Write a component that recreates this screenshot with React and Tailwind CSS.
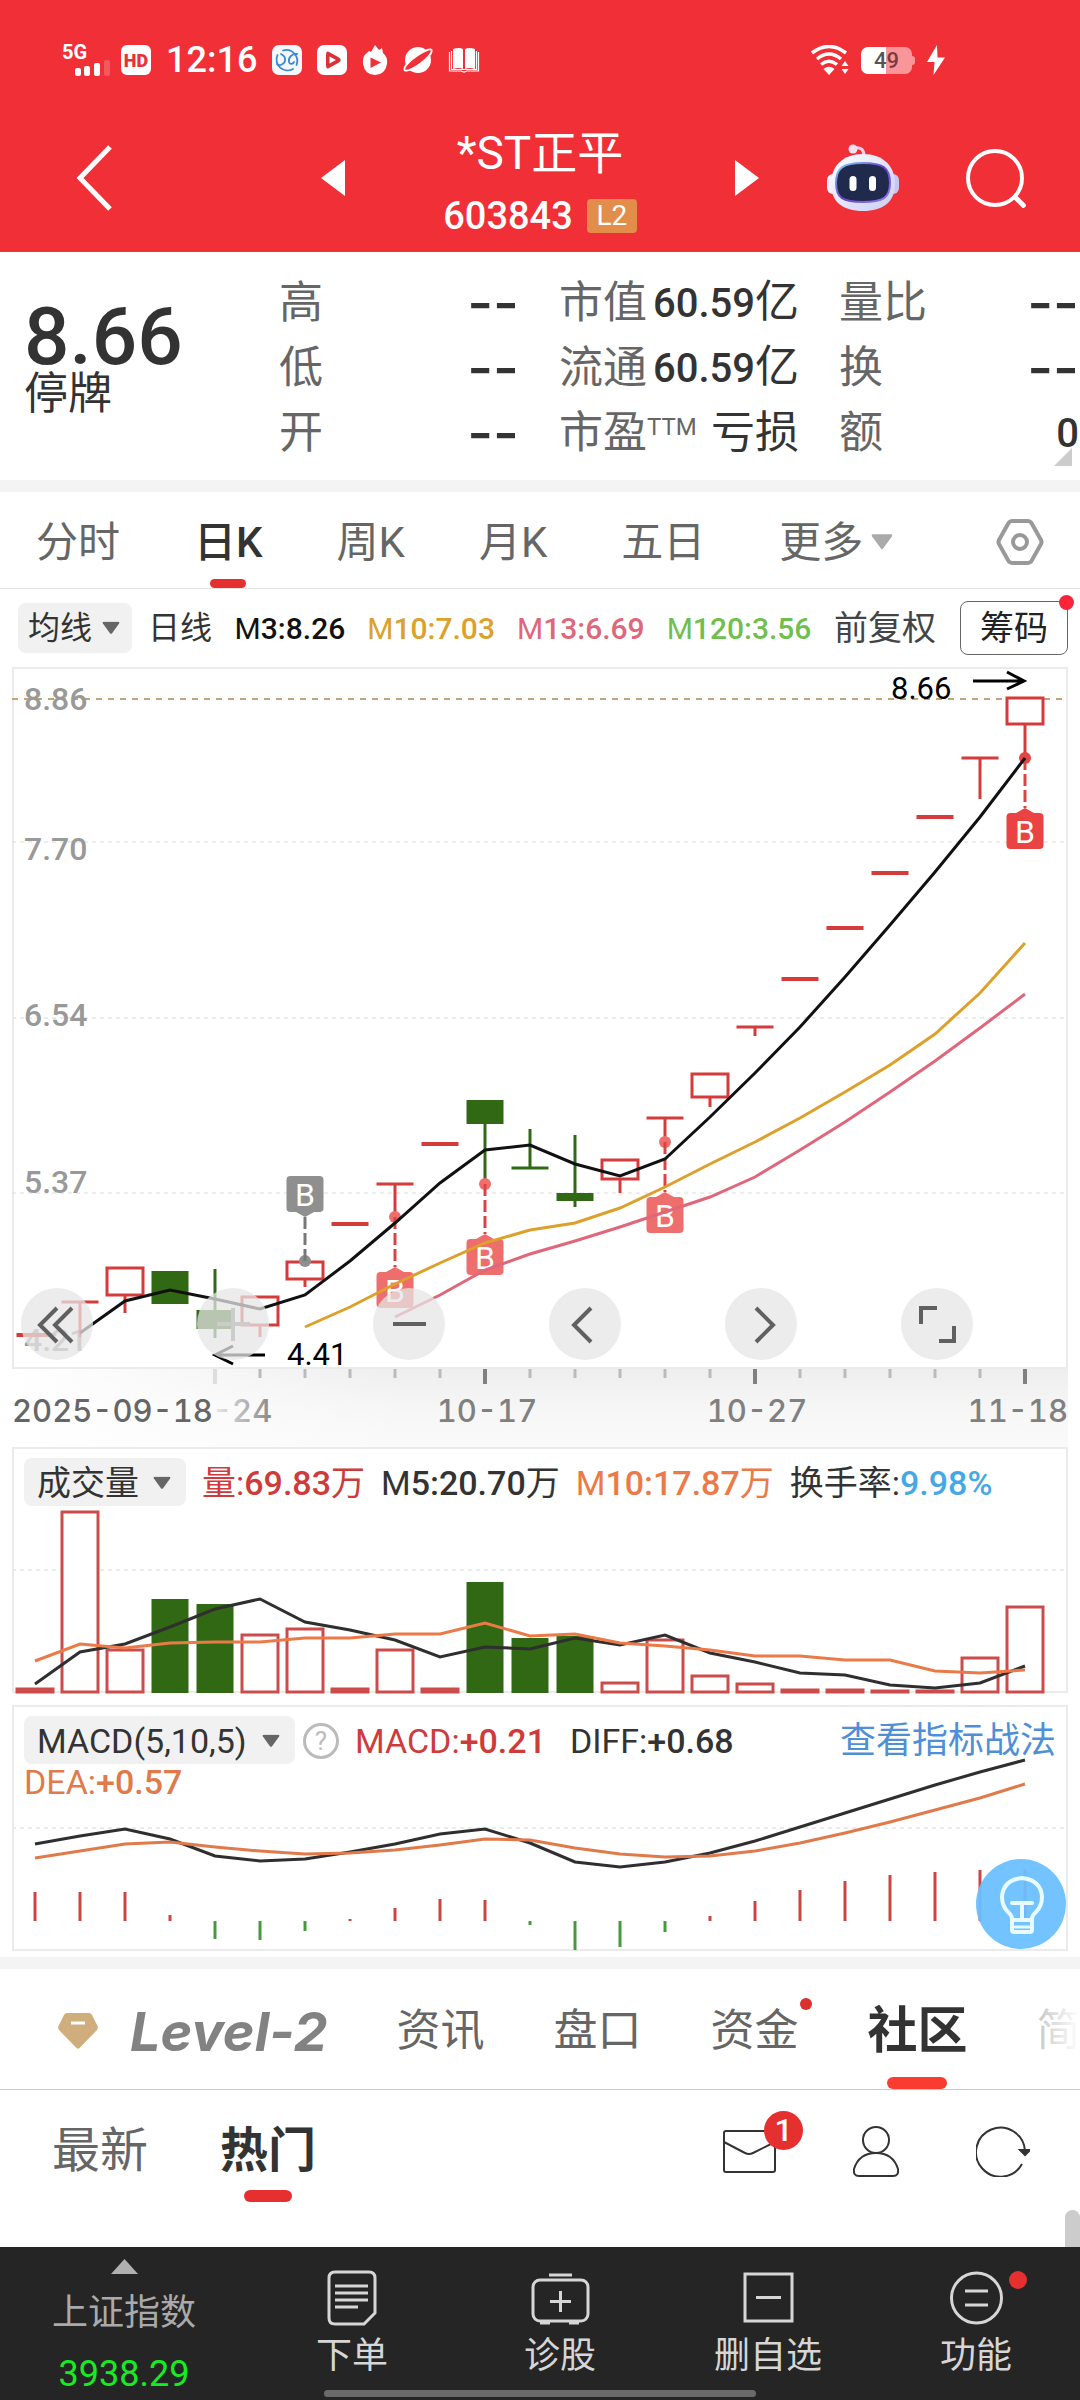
import React, { useState } from 'react'

const STEP = 45
const FIRST_X = 23
const xAt = (i) => FIRST_X + STEP * i
const toPoints = (values, start = 0) => values.map((y, i) => `${xAt(i + start)},${y}`).join(' ')

const RED = '#d63b3b'
const GREEN = '#306814'

// body: [top, bottom], wick: [top, bottom]; type is hollow, solid or flat
const candles = [
  { type: 'flat', color: RED, y: 668 },
  { type: 'flat', color: RED, y: 635, wick: [635, 670] },
  { type: 'hollow', color: RED, body: [601, 628], wick: [628, 646] },
  { type: 'solid', color: GREEN, body: [604, 637] },
  { type: 'solid', color: GREEN, body: [643, 662], wick: [602, 671] },
  { type: 'hollow', color: RED, body: [630, 658], wick: [658, 670] },
  { type: 'hollow', color: RED, body: [595, 612], wick: [612, 620] },
  { type: 'flat', color: RED, y: 557 },
  { type: 'flat', color: RED, y: 517, wick: [517, 550] },
  { type: 'flat', color: RED, y: 477 },
  { type: 'solid', color: GREEN, body: [433, 457], wick: [457, 517] },
  { type: 'flat', color: GREEN, y: 501, wick: [462, 501] },
  { type: 'solid', color: GREEN, body: [526, 534], wick: [468, 540] },
  { type: 'hollow', color: RED, body: [493, 512], wick: [512, 526] },
  { type: 'flat', color: RED, y: 451, wick: [451, 475] },
  { type: 'hollow', color: RED, body: [407, 430], wick: [430, 440] },
  { type: 'flat', color: RED, y: 360, wick: [360, 369] },
  { type: 'flat', color: RED, y: 312 },
  { type: 'flat', color: RED, y: 261 },
  { type: 'flat', color: RED, y: 206 },
  { type: 'flat', color: RED, y: 150 },
  { type: 'flat', color: RED, y: 91, wick: [91, 132] },
  { type: 'hollow', color: RED, body: [31, 57], wick: [57, 91] }
]

const ma3 = [666, 634, 623, 632, 642, 628, 594, 556, 516, 483, 478, 497, 509, 492, 450, 406, 360, 310, 258, 205, 150, 91]
const ma10 = [660, 640, 617, 596, 576, 563, 556, 541, 520, 497, 475, 451, 425, 398, 367, 326, 276]
const ma13 = [650, 628, 603, 587, 574, 560, 545, 530, 510, 483, 455, 425, 394, 361, 327]

const buyMarks = [
  { i: 6, dot: 594, box: 509, color: '#8f8f8f', above: true },
  { i: 8, dot: 550, box: 605, color: '#ee6e6e' },
  { i: 10, dot: 517, box: 572, color: '#ee6e6e' },
  { i: 14, dot: 475, box: 530, color: '#ee6e6e' },
  { i: 22, dot: 91, box: 146, color: '#e94343' }
]

const priceLabels = [
  { text: '8.86', y: 43 },
  { text: '7.70', y: 193 },
  { text: '6.54', y: 359 },
  { text: '5.37', y: 526 },
  { text: '4.21', y: 684 }
]

const volumeTops = [182, 5, 143, 92, 97, 128, 122, 182, 143, 182, 75, 131, 129, 176, 133, 169, 177, 183, 183, 184, 184, 151, 100]
const volumeDown = [3, 4, 10, 11, 12]
const vol5 = [177, 145, 137, 120, 102, 92, 115, 123, 133, 150, 140, 142, 131, 138, 128, 146, 155, 166, 168, 178, 181, 176, 159]
const vol10 = [154, 137, 141, 136, 135, 135, 131, 131, 127, 127, 116, 129, 127, 136, 139, 143, 149, 149, 153, 153, 164, 166, 163]

const diff = [139, 131, 124, 134, 151, 156, 154, 147, 139, 129, 124, 138, 157, 162, 157, 148, 136, 122, 108, 94, 80, 67, 55]
const dea = [153, 146, 139, 137, 142, 146, 149, 148, 145, 140, 134, 135, 143, 149, 152, 151, 146, 138, 128, 117, 105, 93, 79]
const macdEnds = [187, 187, 187, 210, 234, 235, 226, 214, 203, 194, 195, 220, 245, 242, 227, 211, 196, 185, 176, 170, 167, 165, 164]

const periods = ['分时', '日K', '周K', '月K', '五日']

const Caret = ({ className }) => (
  <svg viewBox="0 0 20 14" className={className} aria-hidden="true">
    <path d="M1.500 0H18.500Q20 0.500 19 2L11 13Q10 14 9 13L1 2Q0 0.500 1.500 0Z" fill="currentColor" />
  </svg>
)

const StatusBar = () => (
  <div className="flex h-[120px] items-center justify-between pl-[62px] pr-[135px] text-white">
    <div className="flex items-center gap-[15px]">
      <div className="-mr-1 w-12">
        <div className="text-[20px] font-bold leading-[16px]">5G</div>
        <svg viewBox="0 0 48 16" className="h-4 w-12" fill="#fff">
          <rect x="13" y="8" width="6" height="8" rx="2" />
          <rect x="22" y="6" width="6" height="10" rx="2" />
          <rect x="32" y="3" width="6" height="13" rx="2" />
          <rect x="42" y="0" width="6" height="16" rx="2" opacity="0.2" />
        </svg>
      </div>
      <span className="flex h-[30px] w-[30px] items-center justify-center rounded-md bg-white text-[18px] font-black text-[#e8323a]">HD</span>
      <span className="text-[36px] font-medium leading-[40px]">12:16</span>
      <svg viewBox="0 0 30 30" className="h-[30px] w-[30px]">
        <rect width="30" height="30" rx="7" fill="#f4f8fd" />
        <g fill="none" stroke="#3d86d0" strokeWidth="1.800" strokeLinecap="round">
          <path d="M11 5.500A11 11 0 0 1 24.500 20M21 24A11 11 0 0 1 5.500 10" />
          <path d="M5 19C6 22 14 19 13 14C13 11 9 9 9 9M25 9C20 8 16 13 17 17C18 20 21 19 22 17" />
        </g>
      </svg>
      <svg viewBox="0 0 30 30" className="h-[30px] w-[30px]">
        <rect width="30" height="30" rx="7" fill="#fff" />
        <path d="M9 9.500Q9 5 13 7.500L22 12.500Q25.500 15 22 17.500L13 22.500Q9 25 9 20.500Z" fill="#d9333a" />
        <path d="M12.500 11.500L19 15L12.500 18.500Z" fill="#fff" />
      </svg>
      <svg viewBox="0 0 26 30" className="h-[30px] w-[26px]">
        <path d="M13 0L17 5L20 3L21 8Q26 12 25 19Q23 30 13 30Q3 30 1 19Q0 11 5 8L7 6L9 7Z" fill="#fff" />
        <path d="M8.500 12.500L19 17.500L8.500 23Z" fill="#f12f37" />
      </svg>
      <svg viewBox="0 0 30 30" className="h-[30px] w-[30px]">
        <circle cx="15" cy="15" r="13" fill="#fff" />
        <path d="M1.500 25C-1 19 26 1 28.500 5C31 10 6 29 1.500 25Z" fill="#f12f37" stroke="#fff" strokeWidth="1.800" />
      </svg>
      <svg viewBox="0 0 32 26" className="h-[26px] w-8">
        <path d="M5 2Q11 0 15 2V22Q11 20 5 22ZM17 2Q21 0 27 2V22Q21 20 17 22Z" fill="#fff" />
        <path d="M1.500 5V24H13L16 25L19 24H30.500V5M3.500 4V22.500H28.500V4" fill="none" stroke="#fff" strokeWidth="1.200" />
      </svg>
    </div>
    <div className="flex items-center gap-[12px]">
      <svg viewBox="0 0 38 30" className="h-[30px] w-[38px]">
        <g fill="none" stroke="#fff" strokeWidth="3.500">
          <path d="M1 8Q18 -5 35 8" />
          <path d="M6 14Q18 4 30 14" />
          <path d="M10 19.500Q18 13 26 19.500" />
        </g>
        <path d="M12.500 24Q18 19.500 23.500 24L18 30Z" fill="#fff" />
        <path d="M34 16L37.500 21H30.500ZM34 29L30.500 24H37.500Z" fill="#fff" />
      </svg>
      <div className="flex items-center">
        <div className="flex h-[27px] w-[51px] items-center justify-center rounded-[7px] bg-linear-to-r from-white from-50% to-[#fa9599] to-50% text-[22px] font-medium text-[#555]">
          4<span className="text-[#7d3a3d]">9</span>
        </div>
        <div className="h-[9px] w-[3px] rounded-r-sm bg-[#fa9599]" />
      </div>
      <svg viewBox="0 0 18 30" className="h-[30px] w-[18px]">
        <path d="M10 0L0 17H7.500L6.500 30L18 12.500H10.500Z" fill="#fff" />
      </svg>
    </div>
  </div>
)

const Robot = () => (
  <svg viewBox="0 0 72 68" className="h-[68px] w-[72px]">
    <defs>
      <linearGradient id="shell" x1="0" y1="0" x2="1" y2="1">
        <stop offset="0" stopColor="#fff" />
        <stop offset="1" stopColor="#c9cdf5" />
      </linearGradient>
      <linearGradient id="rim" x1="0" y1="0" x2="1" y2="1">
        <stop offset="0" stopColor="#7fd8f5" />
        <stop offset="0.500" stopColor="#6a3fd0" />
        <stop offset="1" stopColor="#8f7bf0" />
      </linearGradient>
    </defs>
    <path d="M27 4Q37 2 37 12" fill="none" stroke="#eecfe6" strokeWidth="3" />
    <circle cx="26" cy="5" r="4.500" fill="#f6dff0" />
    <rect x="0" y="30" width="12" height="20" rx="6" fill="#f3f1fd" />
    <rect x="60" y="30" width="12" height="20" rx="6" fill="#c8c6ee" />
    <path d="M36 10C56 10 68 22 68 40C68 58 56 67 36 67C16 67 4 58 4 40C4 22 16 10 36 10Z" fill="url(#shell)" />
    <path d="M36 19C56 19 63 24 63 39C63 54 56 58 36 58C16 58 9 54 9 39C9 24 16 19 36 19Z" fill="#1f2a4d" stroke="url(#rim)" strokeWidth="2" />
    <rect x="22.500" y="32" width="7" height="15" rx="3.500" fill="#fff" />
    <rect x="42" y="32" width="7" height="15" rx="3.500" fill="#fff" />
  </svg>
)

const TitleBar = () => (
  <div className="grid h-[132px] grid-cols-[1fr_390px_1fr] text-white">
    <div className="flex items-center justify-between pb-4 pl-[76px]">
      <button aria-label="返回">
        <svg viewBox="0 0 36 66" className="h-[66px] w-9">
          <path d="M34 2L4 33L34 64" fill="none" stroke="#fff" strokeWidth="5" />
        </svg>
      </button>
      <button aria-label="上一只">
        <svg viewBox="0 0 24 36" className="h-9 w-6"><path d="M24 0V36L0 18Z" fill="#fff" /></svg>
      </button>
    </div>
    <div className="flex flex-col items-center pt-[6px]">
      <h1 className="text-[46px] leading-[54px]">*ST正平</h1>
      <div className="mt-1 flex items-center gap-[14px]">
        <span className="text-[38px] font-medium leading-[64px]">603843</span>
        <span className="flex h-[34px] w-[50px] items-center justify-center rounded bg-[#e28d4a] text-[28px]">L2</span>
      </div>
    </div>
    <div className="flex items-center justify-between pb-4 pr-[54px]">
      <button aria-label="下一只">
        <svg viewBox="0 0 24 36" className="h-9 w-6"><path d="M0 0V36L24 18Z" fill="#fff" /></svg>
      </button>
      <button aria-label="智能助手"><Robot /></button>
      <button aria-label="搜索">
        <svg viewBox="0 0 60 60" className="h-[60px] w-[60px]" fill="none" stroke="#fff" strokeWidth="4">
          <circle cx="29" cy="30" r="27" />
          <path d="M48 48L59 59" strokeWidth="5" />
        </svg>
      </button>
    </div>
  </div>
)

const QuoteRow = ({ label, sup, value, dash }) => (
  <div className="flex h-[65px] items-center justify-between whitespace-nowrap">
    <dt className="flex text-[#666]">
      {label}
      {sup && <span className="text-[24px] leading-[32px]">{sup}</span>}
    </dt>
    {dash ? (
      <dd className="font-['Inter',sans-serif] text-[56px] font-medium">--</dd>
    ) : (
      <dd>{value}</dd>
    )}
  </div>
)

const Amount = ({ children, unit }) => (
  <>
    <span className="text-[40px] font-medium">{children}</span>{unit}
  </>
)

const Quote = () => (
  <section className="relative grid h-[228px] grid-cols-[215fr_240fr_240fr_240fr] gap-x-10 pl-6 pr-px pt-[18px] text-[44px] leading-[44px] text-[#333]">
    <div className="pt-8">
      <div className="text-[80px] font-medium leading-[70px]">8.66</div>
      <div>停牌</div>
    </div>
    <dl>
      <QuoteRow label="高" dash />
      <QuoteRow label="低" dash />
      <QuoteRow label="开" dash />
    </dl>
    <dl>
      <QuoteRow label="市值" value={<Amount unit="亿">60.59</Amount>} />
      <QuoteRow label="流通" value={<Amount unit="亿">60.59</Amount>} />
      <QuoteRow label="市盈" sup="TTM" value="亏损" />
    </dl>
    <dl>
      <QuoteRow label="量比" dash />
      <QuoteRow label="换" dash />
      <QuoteRow label="额" value={<Amount>0</Amount>} />
    </dl>
    <svg viewBox="0 0 18 18" className="absolute bottom-[14px] right-2 h-[18px] w-[18px]">
      <path d="M18 0V18H0Z" fill="#ccc" />
    </svg>
  </section>
)

const PeriodTabs = () => {
  const [active, setActive] = useState('日K')

  return (
    <nav className="flex h-[97px] items-stretch gap-[74px] border-b border-[#e4e4e4] pl-9 pr-9 pt-1 text-[42px] text-[#666]">
      {periods.map(p => (
        <button
          key={p}
          onClick={() => setActive(p)}
          className={p === active ? 'relative font-medium text-[#333]' : 'relative'}
        >
          {p}
          {p === active && (
            <span className="absolute bottom-0 left-1/2 h-[9px] w-9 -translate-x-1/2 rounded-full bg-[#e63030]" />
          )}
        </button>
      ))}
      <button className="flex items-center gap-2">
        更多
        <Caret className="h-[18px] w-[22px] text-[#aaa]" />
      </button>
      <button aria-label="设置" className="ml-auto">
        <svg viewBox="0 0 48 46" className="h-[46px] w-12" fill="none" stroke="#999" strokeWidth="4">
          <path d="M16 2H32Q34 2 35.500 4L45 21Q46 23 45 25L35.500 42Q34 44 32 44H16Q14 44 12.500 42L3 25Q2 23 3 21L12.500 4Q14 2 16 2Z" />
          <circle cx="24" cy="23" r="7" />
        </svg>
      </button>
    </nav>
  )
}

const Dropdown = ({ label, options, className, caret }) => (
  <div className="relative">
    <select aria-label={label} className={`appearance-none rounded-lg bg-[#f1f1f1] text-[#333] ${className}`}>
      {options.map(o => <option key={o}>{o}</option>)}
    </select>
    <Caret className={`pointer-events-none absolute top-1/2 h-[13px] w-[18px] -translate-y-1/2 text-[#666] ${caret}`} />
  </div>
)

const AverageBar = () => (
  <div className="flex h-[78px] items-center justify-between whitespace-nowrap pl-[18px] pr-3 text-[30px]">
    <div className="flex items-center gap-4">
      <Dropdown label="主图指标" options={['均线']} className="h-[50px] w-[114px] pl-[10px] text-[32px]" caret="right-3" />
      <span className="text-[32px] text-[#333]">日线</span>
    </div>
    <div className="flex gap-[22px]">
      <span className="text-[#111]">M<b className="font-medium">3:8.26</b></span>
      <span className="text-[#dda02a]">M<b className="font-medium">10:7.03</b></span>
      <span className="text-[#e0667a]">M<b className="font-medium">13:6.69</b></span>
      <span className="text-[#6fbf4f]">M<b className="font-medium">120:3.56</b></span>
    </div>
    <div className="flex items-center gap-6 text-[34px]">
      <span className="text-[#444]">前复权</span>
      <button className="relative h-[54px] w-[108px] rounded-lg border border-[#666] text-[#222]">
        筹码
        <span className="absolute -right-[7px] -top-[7px] h-[15px] w-[15px] rounded-full bg-[#fb2338]" />
      </button>
    </div>
  </div>
)

const Candle = ({ i, candle }) => {
  const x = xAt(i)
  const { type, color, body, wick, y } = candle
  return (
    <g stroke={color} fill={color}>
      {wick && <line x1={x} x2={x} y1={wick[0]} y2={wick[1]} strokeWidth="3" />}
      {type === 'flat' && <line x1={x - 18.5} x2={x + 18.5} y1={y} y2={y} strokeWidth={wick ? 3 : 4} />}
      {type === 'solid' && <rect x={x - 18.5} y={body[0]} width="37" height={body[1] - body[0]} stroke="none" />}
      {type === 'hollow' && (
        <rect x={x - 18} y={body[0]} width="36" height={body[1] - body[0]} fill="#fff" strokeWidth="3" />
      )}
    </g>
  )
}

const BuyMark = ({ i, dot, box, color, above }) => {
  const x = xAt(i)
  const tip = above ? box + 41 : box - 5
  const base = above ? box + 36 : box
  return (
    <g fill={color}>
      <circle cx={x} cy={dot} r="6" />
      <line x1={x} x2={x} y1={dot} y2={tip} stroke={above ? '#777' : '#dc4444'} strokeWidth="3" strokeDasharray="12 4" />
      <path d={`M${x - 9} ${base}L${x} ${tip}L${x + 9} ${base}Z`} />
      <rect x={x - 18.5} y={box} width="37" height="36" rx="4" />
      <text x={x} y={box + 30} textAnchor="middle" fontSize="32" fill="#fff">B</text>
    </g>
  )
}

const chartTools = [
  { name: '快退', path: 'M36 20L19 37L36 54M51 20L34 37L51 54' },
  { name: '放大', path: 'M20 36H53M36 20V53', faded: true },
  { name: '缩小', path: 'M20 36H53' },
  { name: '左移', path: 'M42 20L25 37L42 54' },
  { name: '右移', path: 'M31 20L48 37L31 54' },
  { name: '全屏', path: 'M20 36V20H36M53 38V53H38' }
]

const PriceChart = () => (
  <section className="relative mx-3 border-2 border-[#ebebeb]">
    <svg viewBox="2 2 1052 698" className="block w-full overflow-visible">
      <line x1="0" x2="1056" y1="175" y2="175" stroke="#dcdcdc" strokeDasharray="4 4" />
      <line x1="0" x2="1056" y1="351" y2="351" stroke="#ebebeb" strokeWidth="2" strokeDasharray="4 4" />
      <line x1="0" x2="1056" y1="526" y2="526" stroke="#dcdcdc" strokeDasharray="4 4" />
      <line x1="0" x2="1056" y1="32" y2="32" stroke="#c0a578" strokeWidth="2" strokeDasharray="6 6" />
      {priceLabels.map(l => (
        <text key={l.text} x="12" y={l.y} fontSize="32" fontWeight="500" fill="#999">{l.text}</text>
      ))}
      {candles.map((c, i) => <Candle key={i} i={i} candle={c} />)}
      {buyMarks.map(m => <BuyMark key={m.i} {...m} />)}
      <g fill="none" strokeWidth="3">
        <polyline points={toPoints(ma13, 8)} stroke="#e0667a" />
        <polyline points={toPoints(ma10, 6)} stroke="#dda02a" />
        <polyline points={toPoints(ma3, 1)} stroke="#111" />
        <path d="M961 14H1012M995 5L1012 14L995 22M253 688H203M221 679L203 688L221 697" stroke="#000" />
      </g>
      <text x="879" y="32" fontSize="31">8.66</text>
      <text x="275" y="698" fontSize="31">4.41</text>
    </svg>
    <div className="absolute bottom-[7px] left-[7px] flex gap-[104px]">
      {chartTools.map(t => (
        <button key={t.name} aria-label={t.name} className="h-[72px] w-[72px] rounded-full bg-[#e6e6e6]/75">
          <svg viewBox="0 0 72 72" className="h-full w-full" fill="none" stroke={t.faded ? '#ccc' : '#606060'} strokeWidth="4">
            <path d={t.path} />
          </svg>
        </button>
      ))}
    </div>
  </section>
)

const DateAxis = () => (
  <svg viewBox="0 0 1056 78" className="mx-3 block text-[#808080]">
    <defs>
      <linearGradient id="axisShade" x1="0" y1="0" x2="0" y2="1">
        <stop offset="0" stopColor="#eeeeee" />
        <stop offset="0.500" stopColor="#f6f6f6" />
        <stop offset="1" stopColor="#fafafa" />
      </linearGradient>
      <linearGradient id="axisFade" x1="0" y1="0" x2="1" y2="0">
        <stop offset="0" stopColor="#fff" />
        <stop offset="1" stopColor="#fff" stopOpacity="0" />
      </linearGradient>
      <linearGradient id="dateFade" x1="0" y1="0" x2="1" y2="0">
        <stop offset="0" stopColor="#ececec" />
        <stop offset="0.400" stopColor="#c4c4c4" />
        <stop offset="1" stopColor="#888" />
      </linearGradient>
    </defs>
    <rect width="1056" height="78" fill="url(#axisShade)" />
    <rect width="400" height="78" fill="url(#axisFade)" />
    {candles.map((c, i) => {
      if (i < 4) return null
      const major = i % 6 === 4
      const stroke = i === 4 ? '#ddd' : major ? '#808080' : '#bbb'
      return <line key={i} x1={xAt(i)} x2={xAt(i)} y1="0" y2={major ? 15 : 9} stroke={stroke} strokeWidth={major ? 4 : 3} />
    })}
    <g className="font-['Inter',sans-serif] tabular-nums" fontSize="31" fontWeight="500" fill="#808080">
      <text x="0" y="53" fill="#666">2025-09-18</text>
      <text x="200" y="53" fill="url(#dateFade)">-24</text>
      <text x="475" y="53" textAnchor="middle">10-17</text>
      <text x="745" y="53" textAnchor="middle">10-27</text>
      <text x="1056" y="53" textAnchor="end">11-18</text>
    </g>
  </svg>
)

const VolumeChart = () => (
  <section className="mx-3 border-2 border-[#ebebeb] pt-[10px]">
    <div className="flex h-12 items-center gap-4 whitespace-nowrap pl-[10px] text-[34px] text-[#333]">
      <Dropdown label="副图一指标" options={['成交量']} className="h-12 w-[162px] pl-[13px]" caret="right-[15px]" />
      <span className="text-[#cf3a3a]">量:<b className="font-medium">69.83</b>万</span>
      <span>M<b className="font-medium">5:20.70</b>万</span>
      <span className="text-[#ec7a48]">M<b className="font-medium">10:17.87</b>万</span>
      <span>换手率:<b className="font-medium text-[#45a8e6]">9.98%</b></span>
    </div>
    <svg viewBox="2 0 1052 184" className="block w-full overflow-visible">
      <line x1="0" x2="1056" y1="63" y2="63" stroke="#ebebeb" strokeWidth="2" strokeDasharray="4 4" />
      {volumeTops.map((top, i) =>
        volumeDown.includes(i) ? (
          <rect key={i} x={xAt(i) - 18.5} y={top} width="37" height={186 - top} fill={GREEN} />
        ) : (
          <rect
            key={i}
            x={xAt(i) - 18}
            y={top}
            width="36"
            height={185 - top}
            fill={top > 180 ? RED : '#fff'}
            stroke="#cc4c4c"
            strokeWidth="3"
          />
        )
      )}
      <polyline points={toPoints(vol5)} fill="none" stroke="#2f2f2f" strokeWidth="3" />
      <polyline points={toPoints(vol10)} fill="none" stroke="#ec7a48" strokeWidth="3" />
    </svg>
  </section>
)

const MacdChart = () => (
  <section className="relative mx-3 mt-3 h-[246px] border-2 border-[#ebebeb] pt-[10px]">
    <svg viewBox="2 2 1052 242" className="absolute inset-0 h-full w-full overflow-visible">
      <line x1="0" x2="1056" y1="123" y2="123" stroke="#ebebeb" strokeWidth="2" strokeDasharray="4 4" />
      {macdEnds.map((end, i) => (
        <line key={i} x1={xAt(i)} x2={xAt(i)} y1="216" y2={end} stroke={end < 216 ? '#cc4545' : '#459a3a'} strokeWidth="3" />
      ))}
      <polyline points={toPoints(diff)} fill="none" stroke="#2f2f2f" strokeWidth="3" />
      <polyline points={toPoints(dea)} fill="none" stroke="#e07a4a" strokeWidth="3" />
    </svg>
    <div className="relative flex h-12 items-center whitespace-nowrap pl-[10px] pr-[10px] text-[34px] text-[#333]">
      <Dropdown label="副图二指标" options={['MACD(5,10,5)']} className="h-12 w-[271px] pl-[13px]" caret="right-[15px]" />
      <button aria-label="指标说明" className="ml-2 flex h-9 w-9 items-center justify-center rounded-full border-[3px] border-[#bbb] text-[26px] text-[#bbb]">?</button>
      <span className="ml-4 text-[#cf3a3a]">MACD:<b className="font-medium">+0.21</b></span>
      <span className="ml-6">DIFF:<b className="font-medium">+0.68</b></span>
      <a href="#strategy" className="ml-auto text-[36px] text-[#4f8fd8]">查看指标战法</a>
    </div>
    <div className="relative pl-[10px] text-[34px] leading-[34px] text-[#e07a4a]">DEA:<b className="font-medium">+0.57</b></div>
    <button aria-label="提示" className="absolute bottom-0 right-0 h-[90px] w-[90px] rounded-full bg-[#6ac0ff]/95">
      <svg viewBox="0 0 90 90" className="h-full w-full" fill="none" stroke="#e8fbff" strokeWidth="4" strokeLinejoin="round" strokeLinecap="round">
        <path d="M36 71V60Q36 56 32 53Q26 47 26 38Q27 21 46 19Q65 21 66 38Q66 47 60 53Q56 56 56 60V71Q56 73 54 73H38Q36 73 36 71Z" />
        <path d="M36 44H56M46 44V61M38 61H54" />
        <path d="M39 68H53" strokeWidth="3" />
      </svg>
    </button>
  </section>
)

const SectionTabs = () => (
  <nav className="relative flex h-[121px] items-stretch gap-[69px] overflow-hidden whitespace-nowrap border-b border-[#c8c8c8] pl-[58px] pt-1 text-[44px] text-[#666]">
    <button className="flex items-center gap-8">
      <svg viewBox="0 0 40 36" className="h-9 w-10">
        <path d="M9 0H31Q33 0 34 2L39.500 13Q40.500 15 39 17L21.500 35Q20 36.500 18.500 35L1 17Q-0.500 15 0.500 13L6 2Q7 0 9 0Z" fill="#d0ad7c" />
        <path d="M13 10H27" stroke="#fff" strokeWidth="3" />
      </svg>
      <span className="font-['Inter',sans-serif] text-[54px] font-bold italic text-[#828282]">Level-2</span>
    </button>
    <button>资讯</button>
    <button>盘口</button>
    <button className="relative">
      资金
      <span className="absolute -right-[14px] top-[25px] h-3 w-3 rounded-full bg-[#da3030]" />
    </button>
    <button className="relative text-[50px] font-bold text-[#333]">
      社区
      <span className="absolute bottom-0 left-1/2 h-3 w-[60px] -translate-x-1/2 rounded-full bg-[#fa3b32]" />
    </button>
    <button>简况</button>
    <span className="pointer-events-none absolute right-0 top-0 h-full w-24 bg-linear-to-r from-white/20 to-white" />
  </nav>
)

const Community = () => (
  <section className="relative min-h-[157px] flex-1">
    <div className="flex h-[120px] items-center pl-[52px] pr-[50px] pt-[2px] text-[48px] text-[#666]">
      <button>最新</button>
      <button className="relative ml-[72px] h-full font-bold text-[#333]">
        热门
        <span className="absolute bottom-2 left-1/2 h-3 w-12 -translate-x-1/2 rounded-full bg-[#e63030]" />
      </button>
      <div className="ml-auto flex items-center gap-[77px]">
        <button aria-label="消息" className="relative">
          <svg viewBox="0 0 53 43" className="h-[43px] w-[53px]" fill="none" stroke="#333" strokeWidth="2">
            <rect x="1" y="1" width="51" height="41" rx="2" />
            <path d="M1 12L22 23Q26 25 30 23L52 12" />
          </svg>
          <span className="absolute -right-[27px] -top-[19px] flex h-[39px] w-[39px] items-center justify-center rounded-full bg-[#e63030] text-[32px] font-medium text-white">1</span>
        </button>
        <button aria-label="我的">
          <svg viewBox="0 0 46 51" className="h-[51px] w-[46px]" fill="none" stroke="#333" strokeWidth="2">
            <circle cx="23" cy="14" r="13" />
            <path d="M23 27Q40 27 45 43Q46 50 40 50H6Q0 50 1 43Q6 27 23 27Z" />
          </svg>
        </button>
        <button aria-label="刷新">
          <svg viewBox="0 0 54 51" className="h-[51px] w-[54px]" fill="none" stroke="#333" strokeWidth="2">
            <path d="M46 38A24.500 24.500 0 1 1 49 25" />
            <path d="M44 24H54L49 29Z" fill="#333" />
          </svg>
        </button>
      </div>
    </div>
    <span className="absolute bottom-0 right-0 h-[37px] w-[15px] rounded-t-lg bg-[#ccc]" />
  </section>
)

const actions = [
  {
    label: '下单',
    icon: (
      <>
        <path d="M8 1H42Q48 1 48 7V42L37 53H8Q2 53 2 47V7Q2 1 8 1Z" />
        <path d="M8 15H41M8 22H41M8 29H41M8 36H31" />
      </>
    )
  },
  {
    label: '诊股',
    icon: (
      <>
        <path d="M14 4H37" />
        <rect x="-2" y="9" width="55" height="41" rx="7" />
        <path d="M25.500 20V41M15 30.500H36M5 52H15M34 52H44" />
      </>
    )
  },
  {
    label: '删自选',
    icon: (
      <>
        <rect x="2" y="3" width="47" height="47" />
        <path d="M13 26.500H38" />
      </>
    )
  },
  {
    label: '功能',
    dot: true,
    icon: (
      <>
        <circle cx="25.500" cy="27" r="25" />
        <path d="M14 20H37M14 34H37" />
      </>
    )
  }
]

const BottomBar = () => (
  <footer className="relative grid h-[153px] grid-cols-[248fr_208fr_208fr_208fr_208fr] bg-[#252525] text-[36px] text-[#d6d6d6]">
    <button className="flex flex-col items-center pt-3 text-[#aaa]">
      <svg viewBox="0 0 27 15" className="h-[15px] w-[27px]"><path d="M13.500 0L27 15H0Z" fill="#b0b0b0" /></svg>
      <span className="mt-[14px] leading-[50px]">上证指数</span>
      <span className="mt-2 leading-[56px] text-[#16ec22]">3938.29</span>
    </button>
    {actions.map(a => (
      <button key={a.label} className="relative flex flex-col items-center pt-6">
        <svg viewBox="0 0 51 54" className="h-[54px] w-[51px] overflow-visible" fill="none" stroke="#d6d6d6" strokeWidth="3">
          {a.icon}
        </svg>
        <span className="mt-[6px] leading-[50px]">{a.label}</span>
        {a.dot && <span className="absolute right-[53px] top-6 h-[18px] w-[18px] rounded-full bg-[#e63030]" />}
      </button>
    ))}
    <span className="absolute bottom-[3px] left-1/2 h-[7px] w-[432px] -translate-x-1/2 rounded-full bg-[#6a6a6a]" />
  </footer>
)

const App = () => {
  return (
    <div className="flex min-h-screen flex-col overflow-x-hidden bg-white font-['Roboto','Noto_Sans_CJK_SC',sans-serif]">
      <header className="bg-[#f12f37]">
        <StatusBar />
        <TitleBar />
      </header>
      <Quote />
      <div className="h-3 bg-[#f4f4f4]" />
      <PeriodTabs />
      <AverageBar />
      <PriceChart />
      <DateAxis />
      <VolumeChart />
      <MacdChart />
      <div className="mt-[6px] h-3 bg-[#f4f4f4]" />
      <SectionTabs />
      <Community />
      <BottomBar />
    </div>
  )
}

export default App
